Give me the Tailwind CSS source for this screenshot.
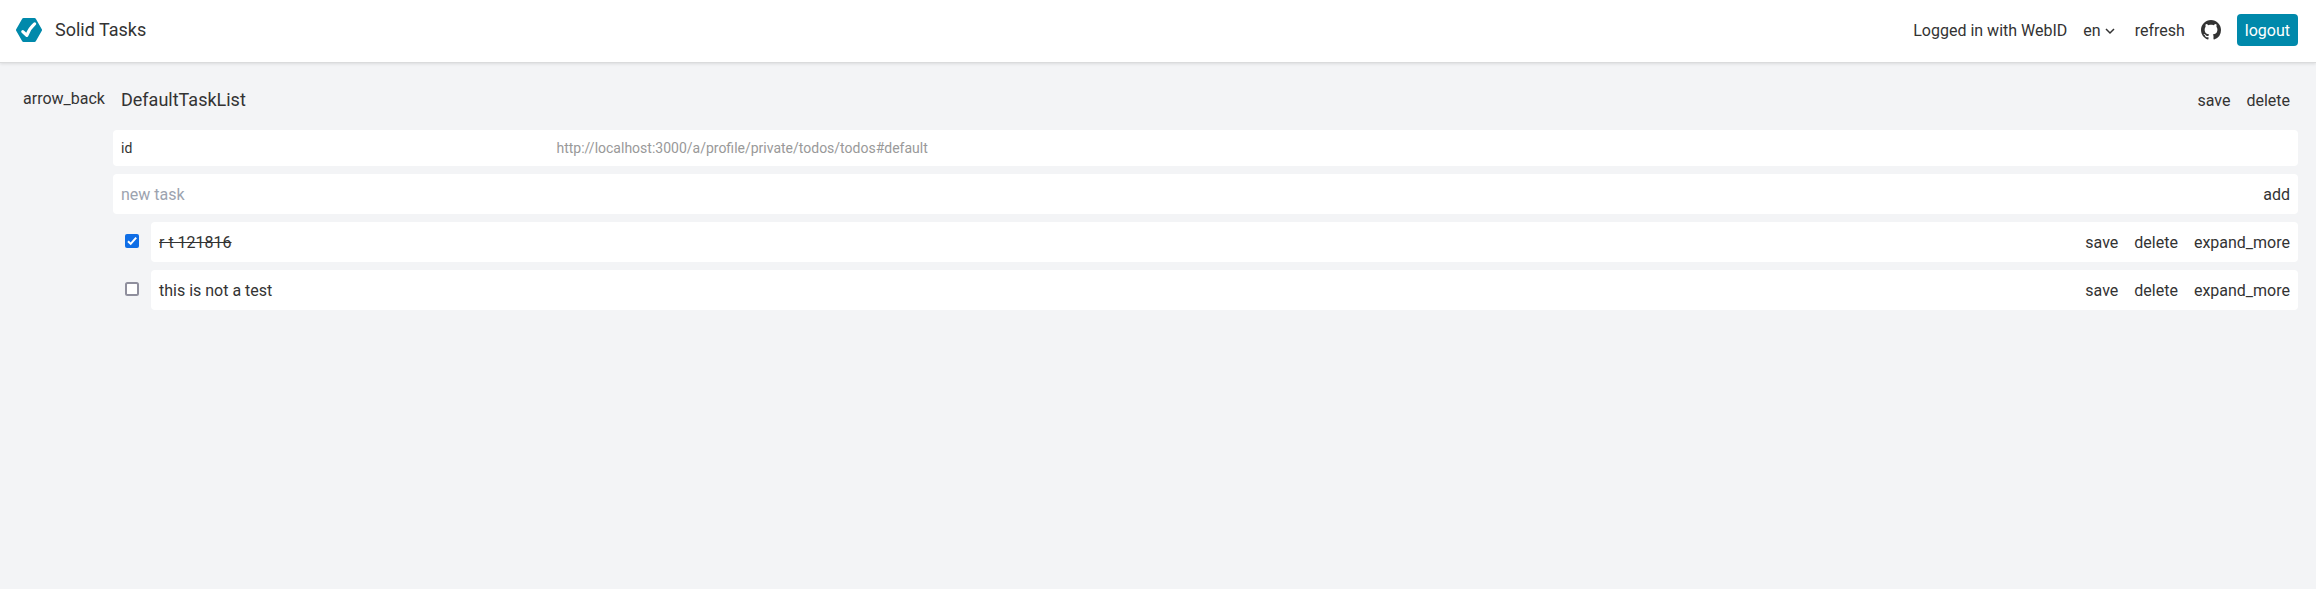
<!DOCTYPE html>
<html lang="en">
<head>
<meta charset="utf-8">
<title>Solid Tasks</title>
<script src="https://cdn.jsdelivr.net/npm/@tailwindcss/browser@4"></script>
</head>
<body class="bg-[#f3f4f6] min-h-screen font-['Roboto',sans-serif] text-base text-[#333333]">
<header class="h-[62px] bg-white flex items-center justify-between pl-4 pr-[18px] pb-0.5 shadow-[0_1px_0_0_#dadbdc,0_2px_3px_0_rgb(0_0_0/0.1)]">
  <div class="flex items-center gap-[13px]">
    <svg class="w-[26px] h-6" viewBox="0 0 26 24"><path fill="#0089ab" d="M7.5 0h11c.6 0 1 .2 1.3.7l6 10.500c.3.5.3 1.100 0 1.600l-6 10.500c-.3.500-.7.700-1.300.700h-11c-.6 0-1-.2-1.300-.7l-6-10.500c-.3-.5-.3-1.100 0-1.600l6-10.500C6.500.2 6.900 0 7.500 0z"/><path d="M6.800 13.600l4 3.800Q13.300 10.500 18.600 5.900" fill="none" stroke="#fff" stroke-width="3.200" stroke-linecap="round" stroke-linejoin="round"/></svg>
    <h1 class="text-lg leading-7">Solid Tasks</h1>
  </div>
  <nav class="flex items-center gap-4">
    <span class="pt-0.5">Logged in with WebID</span>
    <span class="flex items-center gap-px pt-0.5">en
      <svg class="w-4 h-4 mr-px" viewBox="0 0 16 16" fill="none" stroke="#333" stroke-width="1.500"><path d="M4 6L8 10l4-4"/></svg>
    </span>
    <button class="pt-0.5">refresh</button>
    <svg class="w-5 h-5" viewBox="0 0 16 16" fill="#333"><path d="M8 0C3.580 0 0 3.580 0 8c0 3.540 2.290 6.530 5.470 7.590.4.070.55-.17.55-.38 0-.19-.01-.82-.01-1.490-2.010.37-2.530-.49-2.690-.94-.09-.23-.48-.94-.82-1.130-.28-.15-.68-.52-.01-.53.630-.01 1.080.58 1.230.82.720 1.210 1.870.87 2.330.66.070-.52.280-.87.510-1.070-1.780-.2-3.640-.89-3.640-3.950 0-.87.310-1.590.82-2.150-.08-.2-.36-1.020.08-2.120 0 0 .67-.21 2.200.82.640-.18 1.320-.27 2-.27s1.360.09 2 .27c1.530-1.040 2.200-.82 2.200-.82.440 1.100.16 1.920.08 2.120.51.560.82 1.270.82 2.150 0 3.070-1.870 3.750-3.650 3.950.29.250.54.730.54 1.480 0 1.070-.01 1.930-.01 2.200 0 .21.150.46.55.38A8.010 8.010 0 0 0 16 8c0-4.420-3.580-8-8-8z"/></svg>
    <button class="h-8 px-2 pt-0.5 rounded bg-[#0089ab] text-white">logout</button>
  </nav>
</header>
<main class="flex pl-[23px] pr-[18px] pt-6">
  <button class="w-[90px] h-[25px] pt-px text-left shrink-0">arrow_back</button>
  <div class="flex-1 flex flex-col gap-2">
    <div class="h-9 px-2 flex items-start justify-between">
      <h2 class="text-lg leading-7">DefaultTaskList</h2>
      <div class="flex gap-4 pt-[3px]"><button>save</button><button>delete</button></div>
    </div>
    <div class="h-9 px-2 rounded bg-white flex items-center text-sm">
      <span class="w-[435.5px]">id</span><span class="text-[#999999]">http://localhost:3000/a/profile/private/todos/todos#default</span>
    </div>
    <div class="h-10 px-2 pt-0.5 rounded bg-white flex items-center justify-between">
      <span class="text-[#9ca3af]">new task</span><button>add</button>
    </div>
    <div class="flex">
      <span class="w-[38px] pl-3 pt-3"><svg class="w-3.5 h-3.5" viewBox="0 0 14 14"><rect width="14" height="14" rx="2" fill="#0f6ee6"/><path d="M3 7.200l2.700 2.700L11.200 3.600" fill="none" stroke="#fff" stroke-width="2"/></svg></span>
      <div class="flex-1 h-10 px-2 pt-0.5 rounded bg-white flex items-center justify-between">
        <span class="line-through">r t 121816</span>
        <div class="flex gap-4"><button>save</button><button>delete</button><button>expand_more</button></div>
      </div>
    </div>
    <div class="flex">
      <span class="w-[38px] pl-3 pt-3"><svg class="w-3.5 h-3.5" viewBox="0 0 14 14"><rect x="1" y="1" width="12" height="12" rx="1.500" fill="#fff" stroke="#8f8f9d" stroke-width="2"/></svg></span>
      <div class="flex-1 h-10 px-2 pt-0.5 rounded bg-white flex items-center justify-between">
        <span>this is not a test</span>
        <div class="flex gap-4"><button>save</button><button>delete</button><button>expand_more</button></div>
      </div>
    </div>
  </div>
</main>
</body>
</html>
